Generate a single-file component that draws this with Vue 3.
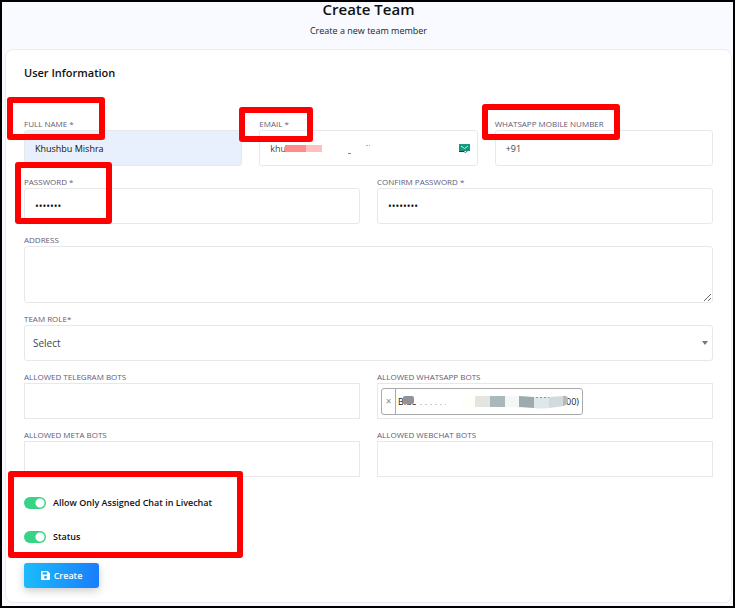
<template>
  <div class="page">
    <header class="page-head">
      <h1>Create Team</h1>
      <p>Create a new team member</p>
    </header>

    <form class="card" @submit.prevent>
      <h2>User Information</h2>

      <div class="row three">
        <div class="field">
          <label for="name">FULL NAME *</label>
          <input id="name" v-model="form.name" class="control filled" type="text">
          <span class="mark mark-name"></span>
        </div>
        <div class="field">
          <label for="email">EMAIL *</label>
          <div class="email-box">
            <input id="email" v-model="form.email" class="control" type="text">
            <svg class="smudge" viewBox="0 0 110 16" width="110" height="16">
              <rect x="0" y="5" width="21" height="7" fill="#ff8b8b" />
              <rect x="21" y="5" width="16" height="7" fill="#ffbfbf" />
              <path d="M63 13.500h3" stroke="#888" />
              <path d="M81 5.500h2M84 5.500h1" stroke="#aaa" />
            </svg>
            <svg class="mail" viewBox="0 0 11 9" width="11" height="9">
              <rect width="11" height="7" fill="#159a82" />
              <path d="M2 2l3.500 2.500L9 2" fill="none" stroke="#c5f0e4" />
              <path d="M0 7.500h5" stroke="#333" />
              <path d="M5 7.500l1.500 1L10 5.500" fill="none" stroke="#1c7a6c" />
            </svg>
          </div>
          <span class="mark mark-email"></span>
        </div>
        <div class="field">
          <label for="mobile">WHATSAPP MOBILE NUMBER</label>
          <input id="mobile" v-model="form.mobile" class="control" type="text">
          <span class="mark mark-mobile"></span>
        </div>
      </div>

      <div class="row two">
        <div class="field">
          <label for="password">PASSWORD *</label>
          <input id="password" v-model="form.password" class="control secret" type="password">
          <span class="mark mark-password"></span>
        </div>
        <div class="field">
          <label for="confirm">CONFIRM PASSWORD *</label>
          <input id="confirm" v-model="form.confirm" class="control secret" type="password">
        </div>
      </div>

      <div class="field">
        <label for="address">ADDRESS</label>
        <textarea id="address" v-model="form.address" class="control area"></textarea>
      </div>

      <div class="field">
        <label for="role">TEAM ROLE*</label>
        <div class="select-box">
          <select id="role" v-model="form.role" class="control">
            <option value="">Select</option>
          </select>
          <svg class="caret" viewBox="0 0 6 4" width="6" height="4">
            <path d="M0 0h6L3 4z" fill="#777" />
          </svg>
        </div>
      </div>

      <div class="row two">
        <div class="field">
          <label for="telegram">ALLOWED TELEGRAM BOTS</label>
          <input id="telegram" class="control square" type="text">
        </div>
        <div class="field">
          <label for="whatsapp">ALLOWED WHATSAPP BOTS</label>
          <div class="control square tags">
            <span class="tag">
              <button type="button" class="remove" aria-label="Remove">×</button>
              <span class="tag-name">
                <span>Blue</span>
                <span>00)</span>
                <svg class="tag-smudge" viewBox="0 0 182 20" width="182" height="20">
                  <path d="M8 4Q80 0 164 4V16H18V13H8z" fill="#fff" />
                  <rect x="5" y="5" width="11" height="8" rx="2" fill="#929299" />
                  <path d="M22 13.500h26" stroke="#ccc" stroke-dasharray="2 3" />
                  <rect x="62" y="5" width="15" height="11" fill="#fffef9" />
                  <rect x="77" y="5" width="15" height="11" fill="#e5e5e0" />
                  <rect x="92" y="5" width="15" height="11" fill="#a9b8ba" />
                  <rect x="107" y="5" width="14" height="11" fill="#f5f7f7" />
                  <path d="M121 5l15 1v11l-15-1z" fill="#9dabae" />
                  <path d="M136 6h15v11q-8 1-15 0z" fill="#dee7ea" />
                  <path d="M151 6l15-1v10l-15 2z" fill="#d2dadd" />
                  <path d="M165 5q5-1 5 4t-5 6z" fill="#b9b9b7" />
                  <path d="M138 6.500h13" stroke="#8b9699" stroke-dasharray="2 2" />
                </svg>
              </span>
            </span>
            <input id="whatsapp" class="tag-input" type="text">
          </div>
        </div>
      </div>

      <div class="row two">
        <div class="field">
          <label for="meta">ALLOWED META BOTS</label>
          <input id="meta" class="control square" type="text">
        </div>
        <div class="field">
          <label for="webchat">ALLOWED WEBCHAT BOTS</label>
          <input id="webchat" class="control square" type="text">
        </div>
      </div>

      <div class="switches">
        <label class="switch">
          <input v-model="form.assignedOnly" type="checkbox">
          <span>Allow Only Assigned Chat in Livechat</span>
        </label>
        <label class="switch">
          <input v-model="form.status" type="checkbox">
          <span>Status</span>
        </label>
        <span class="mark mark-switches"></span>
      </div>

      <button class="create" type="submit">
        <svg viewBox="0 0 14 14" width="9" height="9">
          <path fill="#fff" fill-rule="evenodd" d="M1.500 0H10.500L14 3.500V12.500Q14 14 12.500 14H1.500Q0 14 0 12.500V1.500Q0 0 1.500 0zM2.500 2V5.500H9.500V2zM7 7.500a2.200 2.200 0 1 0 .01 0z" />
        </svg>
        Create
      </button>
    </form>
  </div>
</template>

<script setup>
import { reactive } from 'vue';

const form = reactive({
  name: 'Khushbu Mishra',
  email: 'khu',
  mobile: '+91',
  password: 'team123',
  confirm: 'team1234',
  address: '',
  role: '',
  assignedOnly: true,
  status: true
});
</script>

<style>
body {
  margin: 0;
}
</style>

<style scoped>
* {
  box-sizing: border-box;
}

.page {
  min-height: 100vh;
  padding: 0 1px 3px 3px;
  border: 2px solid #000;
  background: #f8faff;
  color: #212529;
  font-family: "Segoe UI", "Open Sans", "Noto Sans", sans-serif;
  font-size: 9px;
}

.page-head {
  height: 47px;
  text-align: center;
}

h1 {
  margin: 0;
  color: #111;
  font-size: 15px;
  font-weight: 600;
  line-height: 14px;
}

.page-head p {
  margin: 8px 0 0;
  line-height: 14px;
}

.card {
  display: flex;
  flex-direction: column;
  gap: 8px;
  padding: 15px 18px 14px;
  border: 1px solid #e9ecf1;
  border-radius: 8px;
  background: #fff;
}

h2 {
  margin: 0 0 27px;
  color: #111;
  font-size: 11px;
  font-weight: 600;
  line-height: 16px;
}

.row {
  display: grid;
  gap: 17px;
}

.three {
  grid-template-columns: repeat(3, minmax(0, 1fr));
}

.two {
  grid-template-columns: repeat(2, minmax(0, 1fr));
}

.field {
  position: relative;
  display: flex;
  flex-direction: column;
}

.field > label {
  padding-top: 2px;
  color: #5e5b78;
  font-size: 8px;
  line-height: 12px;
}

.control {
  display: block;
  width: 100%;
  height: 36px;
  margin: 0;
  padding: 0 10px;
  border: 1px solid #e6e8eb;
  border-radius: 3px;
  outline: none;
  background: #fff;
  color: #3f454b;
  font-family: inherit;
  font-size: 9px;
}

.filled {
  background: #e8f0fe;
  color: #111;
}

.secret {
  color: #111;
  font-size: 10px;
}

.square {
  border-radius: 0;
}

.area {
  height: 57px;
  resize: vertical;
}

.email-box,
.select-box {
  position: relative;
}

.smudge {
  position: absolute;
  top: 10px;
  left: 26px;
}

.mail {
  position: absolute;
  top: 14px;
  right: 8px;
}

select.control {
  padding: 0 8px;
  appearance: none;
  font-size: 10px;
}

.caret {
  position: absolute;
  top: 16px;
  right: 5px;
}

.tags {
  display: flex;
  align-items: center;
  padding: 0 3px;
}

.tag {
  display: flex;
  flex: none;
  width: 202px;
  height: 27px;
  border: 1px solid #aaa;
  border-radius: 3px;
}

.remove {
  width: 14px;
  padding: 0;
  border: 0;
  border-right: 1px solid #aaa;
  background: none;
  color: #888;
  font-family: inherit;
  font-size: 10px;
}

.tag-name {
  position: relative;
  display: flex;
  flex: 1;
  align-items: center;
  justify-content: space-between;
  padding: 0 3px 0 2px;
  color: #222;
}

.tag-smudge {
  position: absolute;
  top: 2px;
  left: 2px;
}

.tag-input {
  flex: 1;
  min-width: 0;
  border: 0;
  outline: none;
  background: none;
}

.switches {
  position: relative;
  display: flex;
  flex-direction: column;
  gap: 18px;
  padding: 10px 0;
}

.switch {
  display: flex;
  align-items: center;
  gap: 7px;
  color: #111;
  font-weight: 600;
  line-height: 16px;
}

.switch input {
  width: 22px;
  height: 12px;
  margin: 0;
  border-radius: 6px;
  appearance: none;
  background: radial-gradient(circle at 6px 6px, #fff 4px, transparent 5px) #ccc;
}

.switch input:checked {
  background: radial-gradient(circle at 16px 6px, #fff 4px, transparent 5px) #37d485;
}

.create {
  display: flex;
  align-items: center;
  justify-content: center;
  gap: 4px;
  width: 75px;
  height: 25px;
  padding: 0;
  border: 0;
  border-radius: 3px;
  background: linear-gradient(90deg, #1cbcfa, #1a7dfb);
  box-shadow: 0 3px 8px rgba(0, 0, 0, 0.2);
  color: #fff;
  font-family: inherit;
  font-size: 9px;
  font-weight: 600;
}

/* Red callouts drawn over the form */
.mark {
  position: absolute;
  z-index: 1;
  border: 6px solid #fe0000;
  border-radius: 3px;
  pointer-events: none;
}

.mark-name {
  top: -19px;
  left: -17px;
  width: 98px;
  height: 43px;
}

.mark-email {
  top: -9px;
  left: -20px;
  width: 74px;
  height: 35px;
}

.mark-mobile {
  top: -12px;
  left: -13px;
  width: 138px;
  height: 36px;
}

.mark-password {
  top: -12px;
  left: -9px;
  width: 97px;
  height: 62px;
}

.mark-switches {
  top: -14px;
  left: -16px;
  width: 235px;
  height: 87px;
}
</style>
